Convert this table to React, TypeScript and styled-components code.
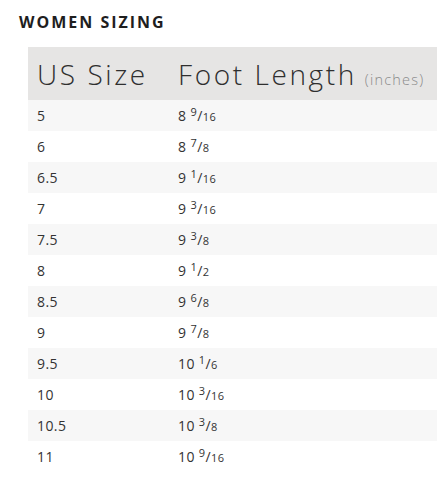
import styled, { createGlobalStyle } from "styled-components";

const GlobalStyle = createGlobalStyle`
  html, body {
    margin: 0;
    padding: 0;
    background: #ffffff;
  }
  body {
    font-family: "Open Sans", "Liberation Sans", sans-serif;
    color: #333333;
  }
`;

const Page = styled.div`
  width: 437px;
  height: 484px;
  overflow: hidden;
  box-sizing: border-box;
  padding-top: 13px;
`;

const Title = styled.h2`
  margin: 0 0 0 19px;
  font-family: "Open Sans", "Liberation Sans", sans-serif;
  font-weight: 700;
  font-size: 16px;
  line-height: 18px;
  letter-spacing: 2px;
  color: #1e1e1e;
`;

const Table = styled.div`
  margin: 16px 0 0 28px;
  width: 409px;
`;

const HeaderRow = styled.div`
  display: flex;
  align-items: center;
  height: 53px;
  padding-left: 9px;
  background: #e6e5e4;
  color: #2f2f2f;
`;

const HeaderCell = styled.div<{ $width?: number }>`
  flex: ${(p) => (p.$width ? `0 0 ${p.$width}px` : "1")};
  font-weight: 300;
  font-size: 28px;
  letter-spacing: 2.6px;
  white-space: nowrap;
`;

const Unit = styled.span`
  font-size: 14.5px;
  letter-spacing: 1.2px;
  color: #8a8a8a;
  margin-left: 8px;
`;

const Row = styled.div<{ $shaded: boolean }>`
  display: flex;
  align-items: center;
  height: 31px;
  padding-left: 9px;
  background: ${(p) => (p.$shaded ? "#f7f7f7" : "#ffffff")};
  font-size: 14px;
  letter-spacing: 0.4px;
  color: #333333;
`;

const Cell = styled.div<{ $width?: number }>`
  flex: ${(p) => (p.$width ? `0 0 ${p.$width}px` : "1")};
  white-space: nowrap;
`;

const Num = styled.sup`
  font-size: 11px;
  vertical-align: 5px;
  line-height: 0;
`;

const Den = styled.span`
  font-size: 11px;
`;

type tSize = {
  us: string;
  whole: string;
  num: string;
  den: string;
};

const sizes: tSize[] = [
  { us: "5", whole: "8", num: "9", den: "16" },
  { us: "6", whole: "8", num: "7", den: "8" },
  { us: "6.5", whole: "9", num: "1", den: "16" },
  { us: "7", whole: "9", num: "3", den: "16" },
  { us: "7.5", whole: "9", num: "3", den: "8" },
  { us: "8", whole: "9", num: "1", den: "2" },
  { us: "8.5", whole: "9", num: "6", den: "8" },
  { us: "9", whole: "9", num: "7", den: "8" },
  { us: "9.5", whole: "10", num: "1", den: "6" },
  { us: "10", whole: "10", num: "3", den: "16" },
  { us: "10.5", whole: "10", num: "3", den: "8" },
  { us: "11", whole: "10", num: "9", den: "16" },
];

export default function App() {
  return (
    <Page>
      <GlobalStyle />
      <Title>WOMEN SIZING</Title>
      <Table>
        <HeaderRow>
          <HeaderCell $width={141}>US Size</HeaderCell>
          <HeaderCell>
            Foot Length<Unit>(inches)</Unit>
          </HeaderCell>
        </HeaderRow>
        {sizes.map((s, i) => (
          <Row key={s.us} $shaded={i % 2 === 0}>
            <Cell $width={141}>{s.us}</Cell>
            <Cell>
              {s.whole} <Num>{s.num}</Num>/<Den>{s.den}</Den>
            </Cell>
          </Row>
        ))}
      </Table>
    </Page>
  );
}
